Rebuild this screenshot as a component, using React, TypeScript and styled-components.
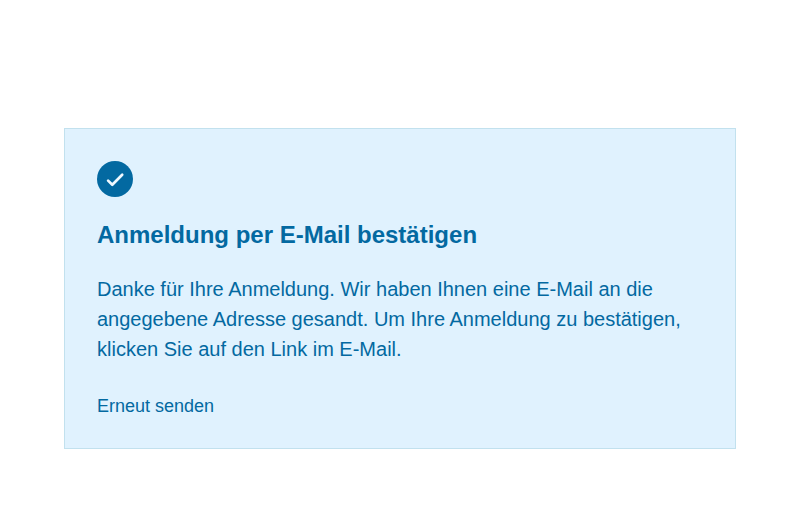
import React from 'react';
import styled, { createGlobalStyle } from 'styled-components';

const GlobalStyle = createGlobalStyle`
  *, *::before, *::after { box-sizing: border-box; }
  body {
    margin: 0;
    background: #fff;
    font-family: "Liberation Sans", Arial, sans-serif;
  }
`;

const Page = styled.main`
  padding: 128px 64px 64px;
`;

const Card = styled.section`
  display: flex;
  flex-direction: column;
  align-items: flex-start;
  padding: 32px;
  height: 321px;
  border: 1px solid #c2e1ee;
  background: #e0f2fe;
  color: #0369a1;
`;

const CheckIcon = styled.svg`
  display: block;
  flex: none;
  width: 36px;
  height: 36px;
`;

const Title = styled.h1`
  margin: 22px 0 0;
  font-size: 24px;
  line-height: 32px;
  font-weight: 700;
`;

const Message = styled.p`
  margin: 23px 0 0;
  font-size: 20px;
  line-height: 30px;
`;

const ResendButton = styled.button`
  margin: 28px 0 0;
  padding: 0;
  border: 0;
  background: none;
  color: inherit;
  font: 18px/28px "Liberation Sans", Arial, sans-serif;
  cursor: pointer;
`;

export default function App() {
  return (
    <>
      <GlobalStyle />
      <Page>
        <Card>
          <CheckIcon viewBox="0 0 36 36" aria-hidden="true">
            <circle cx="18" cy="18" r="18" fill="#0369a1" />
            <path
              d="M11.1 19.6l4.2 4.1L25.2 13.8"
              fill="none"
              stroke="#f0f9ff"
              strokeWidth="2.7"
              strokeLinecap="round"
              strokeLinejoin="round"
            />
          </CheckIcon>
          <Title>Anmeldung per E-Mail bestätigen</Title>
          <Message>
            Danke für Ihre Anmeldung. Wir haben Ihnen eine E-Mail an die angegebene Adresse
            gesandt. Um Ihre Anmeldung zu bestätigen, klicken Sie auf den Link im E-Mail.
          </Message>
          <ResendButton type="button">Erneut senden</ResendButton>
        </Card>
      </Page>
    </>
  );
}
